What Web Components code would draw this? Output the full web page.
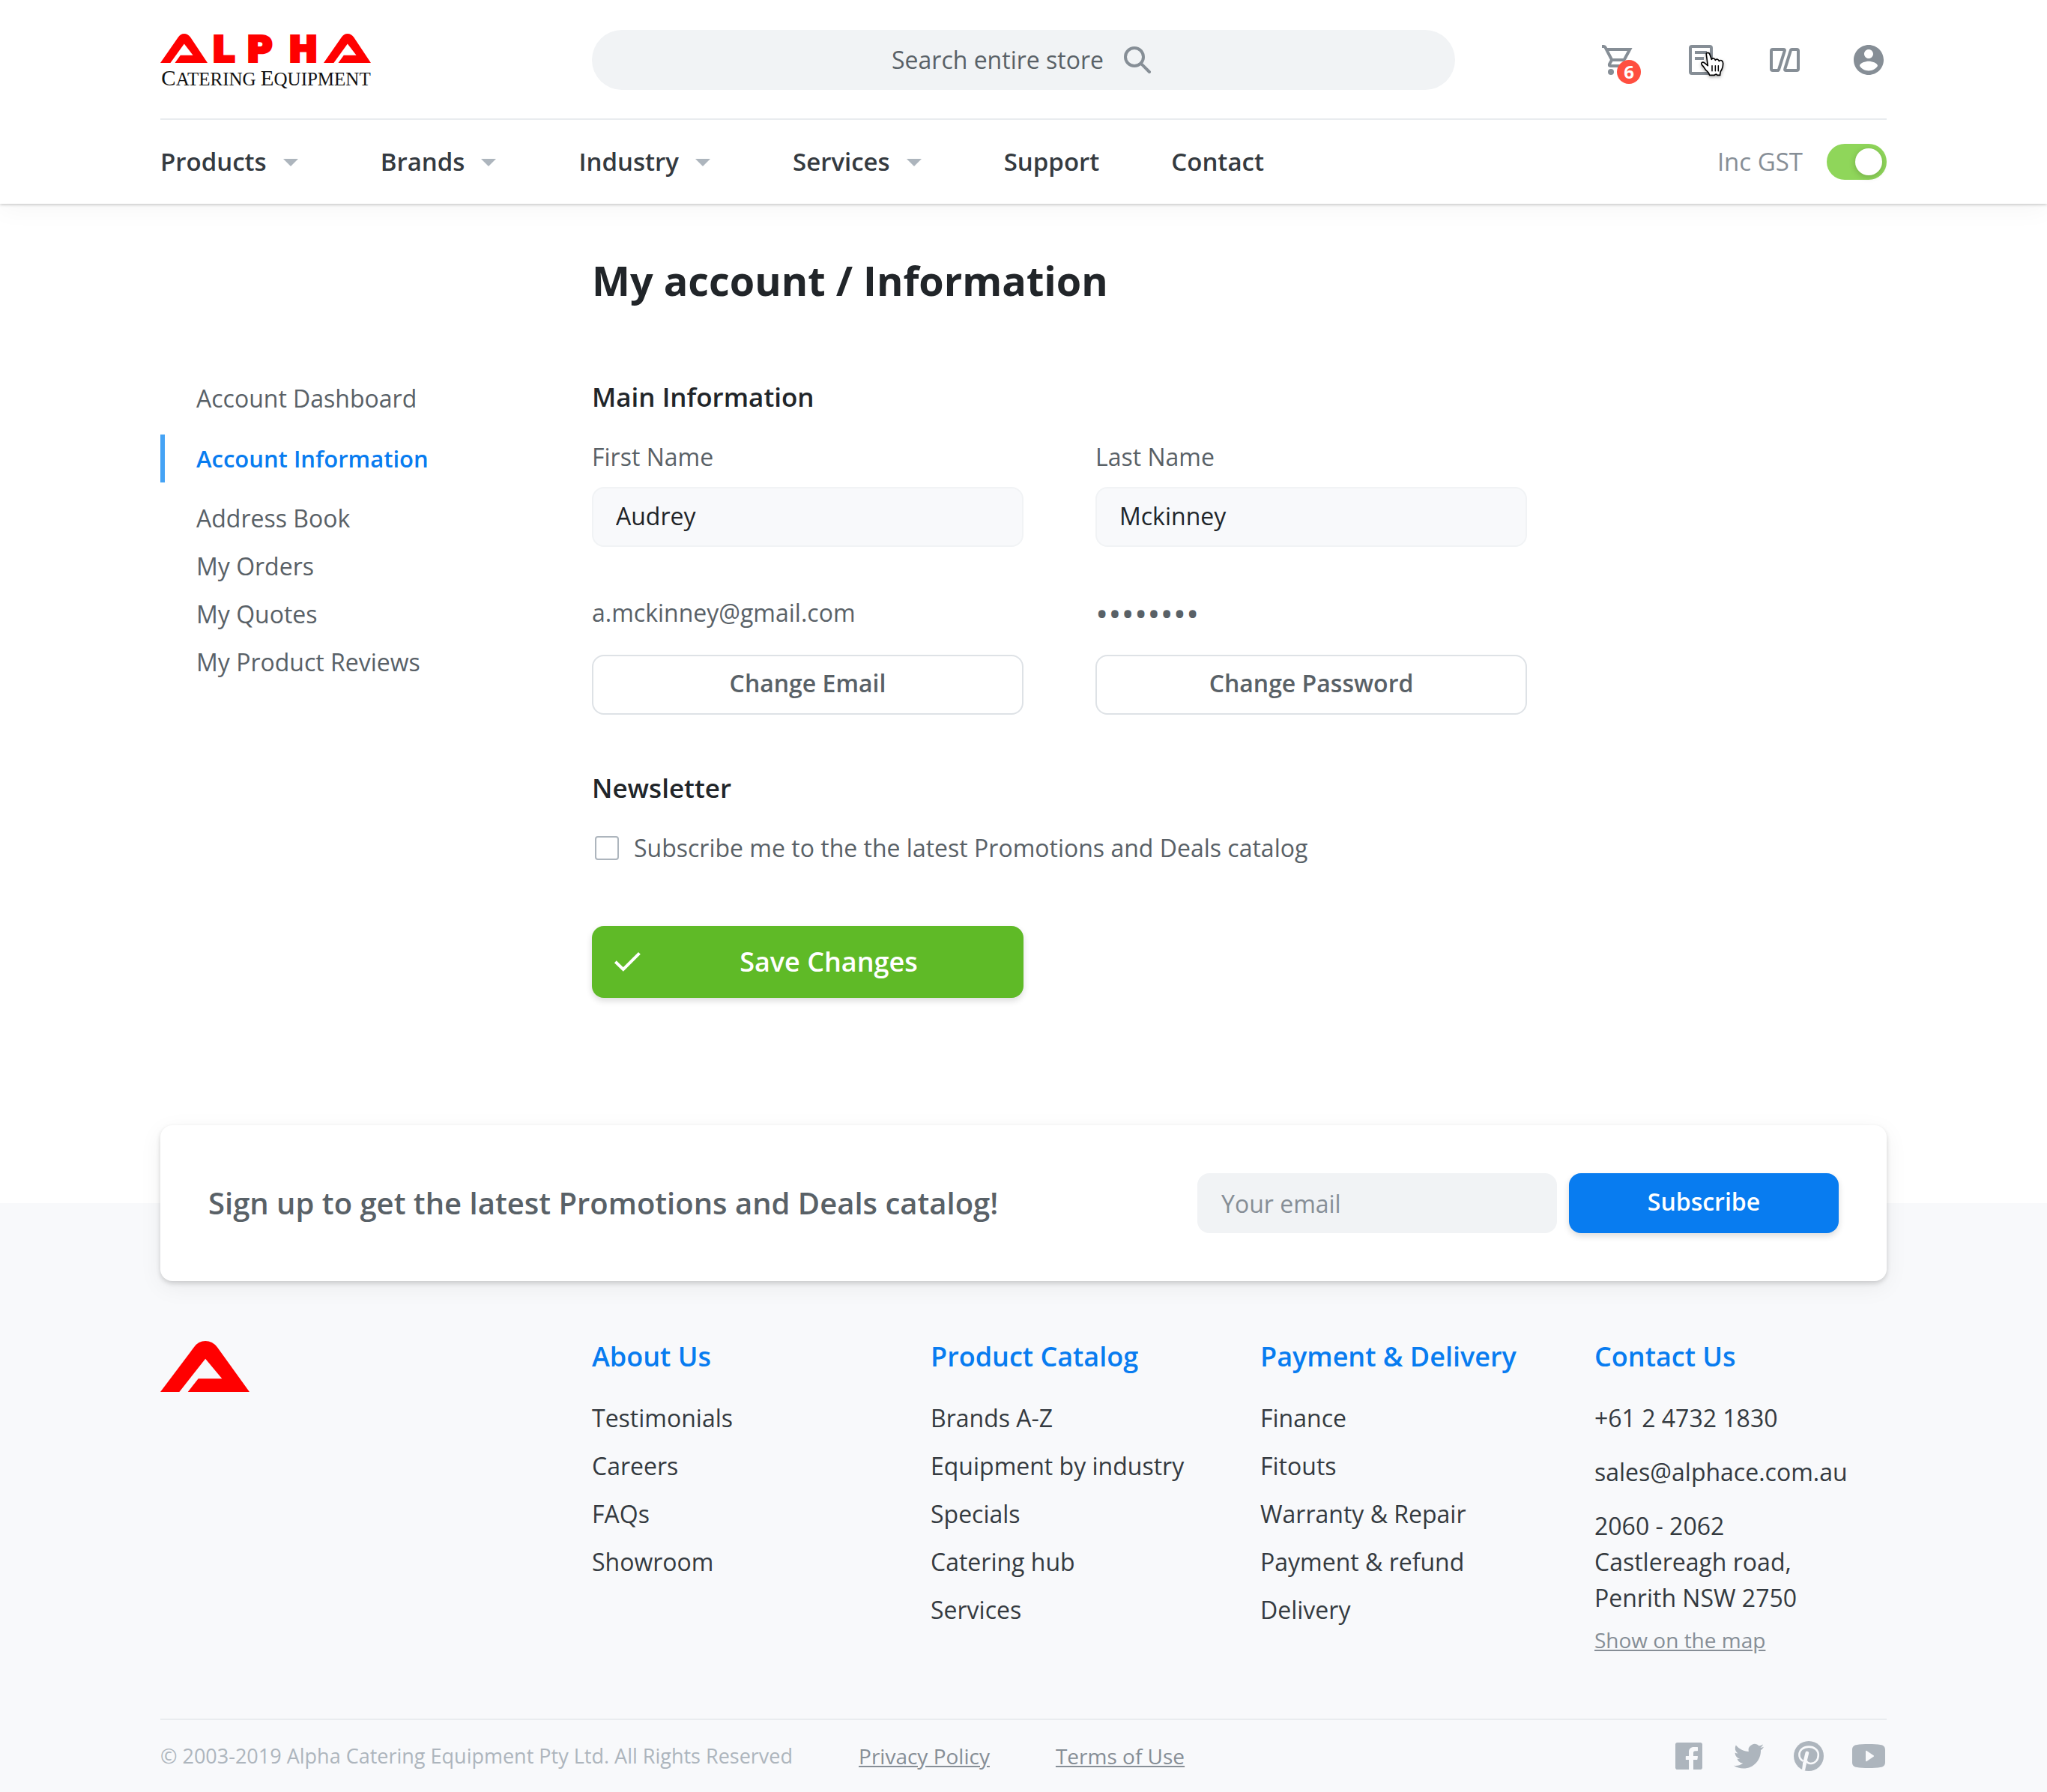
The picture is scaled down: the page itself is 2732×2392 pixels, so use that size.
<!DOCTYPE html>
<html lang="en">
<head>
<meta charset="utf-8">
<meta name="viewport" content="width=device-width, initial-scale=1">
<title>My account / Information</title>
<style>
  :root {
    --ink: #212529;
    --ink-2: #343a40;
    --ink-3: #596167;
    --muted: #868e96;
    --faint: #adb5bd;
    --line: #e9ecef;
    --field: #f1f3f5;
    --canvas: #f8f9fb;
    --blue: #087cf0;
    --green: #5fba27;
    --gutter: max(24px, calc((100% - 2304px) / 2));
  }
  body {
    margin: 0;
    background: #fff;
    color: var(--ink-3);
    font: 400 32px/48px "Open Sans", "Noto Sans", sans-serif;
  }
</style>
</head>
<body>
<account-page></account-page>

<script>
const reset = `
  *, *::before, *::after { box-sizing: border-box; }
  h1, h2, h3, p, ul { margin: 0; padding: 0; }
  ul { list-style: none; }
  a { color: inherit; text-decoration: none; }
  input, button { font: inherit; color: inherit; margin: 0; }
  svg { display: block; flex: none; }
`;

function define(name, css, html) {
  const template = document.createElement('template');
  customElements.define(name, class extends HTMLElement {
    constructor() {
      super();
      const root = this.attachShadow({ mode: 'open' });
      const markup = typeof html === 'function' ? html(this) : html;
      template.innerHTML = `<style>${reset}${css}</style>${markup}`;
      root.append(template.content.cloneNode(true));
    }
  });
}

/* Icons, all on a 24-unit grid */
const icons = {
  search: '<path fill="none" stroke="currentColor" stroke-width="2" stroke-linecap="round" d="M15.2 15.2L20 20"/><circle cx="10" cy="10" r="6" fill="none" stroke="currentColor" stroke-width="2"/>',
  cart: '<g fill="none" stroke="currentColor" stroke-width="2"><path d="M2 3h1.3q.7 0 1 .7L8.6 12h7.6q.6 0 .9-.5L20.600 5H5"/><path d="M8.600 12L7.100 14.600Q6.400 16 7.800 16H20"/></g><circle cx="8" cy="20" r="2" fill="currentColor"/><circle cx="18" cy="20" r="2" fill="currentColor"/>',
  quote: '<rect x="5" y="3" width="14" height="18" rx="1" fill="none" stroke="currentColor" stroke-width="2"/><path fill="none" stroke="currentColor" stroke-width="2" d="M8 7h8M8 11h6"/>',
  compare: '<g fill="none" stroke="currentColor" stroke-width="2" stroke-linejoin="round"><path d="M4 5h7.200q1 0 .7.900L8.100 18.200q-.2.800-1 .800H4q-1 0-1-1V6q0-1 1-1z"/><path d="M20 19h-7.200q-1 0-.7-.900L15.900 5.800q.2-.8 1-.8H20q1 0 1 1v12q0 1-1 1z"/></g>',
  user: '<path fill="currentColor" d="M12 2C6.480 2 2 6.480 2 12s4.480 10 10 10 10-4.480 10-10S17.520 2 12 2zm0 3c1.660 0 3 1.340 3 3s-1.340 3-3 3-3-1.340-3-3 1.340-3 3-3zm0 14.200c-2.500 0-4.710-1.280-6-3.220.030-1.990 4-3.080 6-3.080 1.990 0 5.970 1.090 6 3.080-1.290 1.940-3.500 3.220-6 3.220z"/>',
  caret: '<path fill="currentColor" d="M7 10l5 5 5-5z"/>',
  check: '<path fill="none" stroke="currentColor" stroke-width="2" stroke-linecap="square" d="M4.400 12.600L8.900 17 19 6.900"/>',
  facebook: '<path fill="currentColor" d="M19.700 3H4.300C3.600 3 3 3.600 3 4.300v15.400c0 .7.600 1.300 1.300 1.300h7.700v-6.500h-1.800c-.2 0-.3-.1-.3-.3v-1.900c0-.2.100-.3.300-.3H12V9.300C12 7.200 13.300 6 15.300 6h2.400c.2 0 .3.100.3.300v2c0 .2-.1.300-.3.300h-1.400c-.9 0-1.300.4-1.300 1.300V12h2.700c.2 0 .3.200.3.400l-.3 1.900c0 .1-.1.200-.3.200H15V21h4.700c.7 0 1.300-.6 1.300-1.300V4.300c0-.7-.6-1.300-1.300-1.300z"/>',
  twitter: '<path fill="currentColor" d="M22 5.900c-.7.300-1.500.5-2.300.6.8-.5 1.500-1.300 1.800-2.200-.8.500-1.700.8-2.600 1A4.100 4.100 0 0 0 11.900 9c-3.400-.2-6.400-1.800-8.500-4.300a4.100 4.100 0 0 0 1.300 5.500c-.7 0-1.300-.2-1.900-.5 0 2 1.400 3.700 3.300 4.100-.6.200-1.200.2-1.800.1.500 1.600 2 2.800 3.800 2.800A8.300 8.300 0 0 1 2 18.400 11.700 11.700 0 0 0 8.300 20.300c7.500 0 11.700-6.300 11.700-11.700v-.5c.8-.6 1.500-1.300 2-2.200z"/>',
  pinterest: '<circle cx="12" cy="12" r="10" fill="currentColor"/><path fill="none" stroke="var(--canvas)" stroke-width="1.300" d="M8.200 15.300C6.500 14.300 5.700 12.900 5.700 11.200 5.700 8 8.500 5.800 12.100 5.800c3.700 0 6.300 2.300 6.300 5.400 0 3.400-2.200 5.800-5 5.800-1.500 0-2.500-.7-2.900-1.700"/><path fill="none" stroke="var(--canvas)" stroke-width="2.400" stroke-linecap="round" d="M10.900 10L9.200 17"/><path fill="var(--canvas)" d="M8.100 16.500l2.400.3-1 4.900-2-.6z"/>',
  youtube: '<path fill="currentColor" fill-rule="evenodd" d="M4.200 4.500C6 4.100 9 4 12 4s6 .1 7.800.5C22.200 4.800 23 6 23 8v8c0 2-.8 3.200-3.200 3.500C18 19.900 15 20 12 20s-6-.1-7.800-.5C1.800 19.200 1 18 1 16V8c0-2 .8-3.200 3.200-3.500zM10 8.900v6.200c0 .4.300.6.700.4l4.600-3.100c.3-.2.300-.6 0-.8l-4.600-3.100c-.4-.2-.7 0-.7.400z"/>'
};

define('ui-icon',
  `:host { display: block; width: 48px; height: 48px; flex: none; }`,
  el => `<svg width="48" height="48" viewBox="0 0 24 24" aria-hidden="true">${icons[el.getAttribute('name')]}</svg>`);

/* The red A emblem: alone in the footer, twice in the logo */
const emblem = 'M0 115 71 14Q80 0 95 0T120 14L188 115H58L80 85H130L95 40 40 115Z';

define('alpha-mark',
  `:host { display: block; } `,
  `<svg width="119" height="68" viewBox="0 0 188 115" preserveAspectRatio="none" role="img" aria-label="Alpha"><path fill="#f00" d="${emblem}"/></svg>`);

define('alpha-logo', `
  :host { display: block; color: #111; }
  a { display: block; width: 282px; padding-top: 6px; }
  svg { overflow: visible; }
  p { margin-top: 4px; font: 25px/32px "Liberation Serif", serif; text-transform: uppercase; white-space: nowrap; text-align: center; }
  p span { font-size: 29px; }
  text { font: 700 47px "DejaVu Sans", sans-serif; fill: #f00; stroke: #f00; stroke-width: 4; }
`, `<a href="#"><svg width="282" height="39" viewBox="0 0 282 39" role="img" aria-label="Alpha">
    <svg width="63" height="39" viewBox="0 0 188 115" preserveAspectRatio="none"><path fill="#f00" d="${emblem}"/></svg>
    <text x="69 115 171" y="37">LPH</text>
    <svg x="218" width="63" height="39" viewBox="0 0 188 115" preserveAspectRatio="none"><path fill="#f00" d="${emblem}"/></svg>
  </svg><p><span>C</span>atering <span>E</span>quipment</p></a>`);

define('search-box', `
  :host { display: block; }
  label { display: flex; align-items: center; justify-content: center; gap: 16px; height: 80px; border-radius: 40px; background: var(--field); color: var(--muted); }
  input { width: 288px; padding: 0; border: 0; outline: 0; background: none; appearance: none; }
  input::-webkit-search-cancel-button { display: none; }
  input::placeholder { color: var(--ink-3); opacity: 1; }
`, `<label><input type="search" placeholder="Search entire store" aria-label="Search entire store"><ui-icon name="search"></ui-icon></label>`);

define('icon-link', `
  :host { display: block; position: relative; color: var(--muted); }
  a { display: block; }
`, el => `<a href="#" aria-label="${el.getAttribute('label')}"><ui-icon name="${el.getAttribute('icon')}"></ui-icon></a><slot></slot>`);

define('count-badge',
  `:host { position: absolute; left: 24px; top: 24px; width: 32px; height: 32px; border-radius: 50%; background: #ff4f40; color: #fff; font-size: 24px; font-weight: 700; line-height: 32px; text-align: center; }`,
  `<slot></slot>`);

define('hand-pointer', `
  :host { position: absolute; left: 22px; top: 12px; pointer-events: none; }
  svg { filter: drop-shadow(0 2px 2px rgba(0,0,0,.3)); }
`, `<svg width="34" height="36" viewBox="474 116 102 108" aria-hidden="true">
    <path fill="#fff" stroke="#000" stroke-width="5" stroke-linejoin="round" d="M502 131Q501 123 508 123 514 123 516 130L523 150Q526 144 532 146 537 148 538 153 541 148 547 150 552 152 553 157 557 152 563 154 569 157 569 166 569 180 564 190 556 199 557 213H546Q540 206 535 213H515Q514 205 506 198 498 192 494 184 490 177 485 173 480 166 485 162 490 160 496 165L508 175Z"/>
    <path fill="none" stroke="#000" stroke-width="4.500" stroke-linecap="round" d="M525 175V196M538 175V196M550 175V196"/>
  </svg>`);

define('nav-item', `
  :host { display: block; color: var(--ink-2); font-size: 33px; font-weight: 600; }
  a { display: flex; align-items: center; gap: 8px; }
  ui-icon { color: var(--faint); }
`, el => `<a href="#"><slot></slot>${el.hasAttribute('menu') ? '<ui-icon name="caret"></ui-icon>' : ''}</a>`);

define('tax-switch', `
  :host { display: block; color: var(--muted); font-size: 33px; }
  label { display: flex; align-items: center; gap: 32px; }
  input { appearance: none; display: flex; justify-content: flex-end; width: 80px; height: 48px; padding: 6px; border-radius: 24px; background: #8fd65a; }
  input::before { content: ""; width: 36px; height: 36px; border-radius: 50%; background: #fff; box-shadow: 0 2px 8px rgba(0,0,0,.2); }
  input:not(:checked) { justify-content: flex-start; background: var(--faint); }
`, `<label><slot></slot><input type="checkbox" role="switch" checked></label>`);

define('site-header', `
  :host { display: block; padding: 0 var(--gutter); background: #fff; box-shadow: 0 1px 4px rgba(0,0,0,.24), 0 8px 32px rgba(0,0,0,.04); }
  .top { display: grid; grid-template-columns: 1fr 2fr 1fr; align-items: center; height: 160px; padding-top: 2px; border-bottom: 2px solid var(--line); }
  .tools { display: flex; justify-content: flex-end; gap: 64px; }
  nav { display: flex; align-items: center; gap: 96px; height: 112px; }
  tax-switch { margin-left: auto; }
`, `<div class="top">
    <alpha-logo></alpha-logo>
    <search-box></search-box>
    <div class="tools">
      <icon-link icon="cart" label="Cart"><count-badge>6</count-badge></icon-link>
      <icon-link icon="quote" label="Quotes"><hand-pointer></hand-pointer></icon-link>
      <icon-link icon="compare" label="Compare"></icon-link>
      <icon-link icon="user" label="Account"></icon-link>
    </div>
  </div>
  <nav aria-label="Main">
    <nav-item menu>Products</nav-item>
    <nav-item menu>Brands</nav-item>
    <nav-item menu>Industry</nav-item>
    <nav-item menu>Services</nav-item>
    <nav-item>Support</nav-item>
    <nav-item>Contact</nav-item>
    <tax-switch>Inc GST</tax-switch>
  </nav>`);

define('side-link', `
  :host { display: block; border-left: 6px solid transparent; padding-left: 42px; line-height: 64px; }
  :host([current]) { margin: 16px 0; border-color: #45a3f5; color: var(--blue); font-size: 31px; font-weight: 600; }
`, `<a href="#"><slot></slot></a>`);

define('text-field', `
  :host { display: block; }
  label { display: block; margin-bottom: 16px; }
  input { display: block; width: 100%; height: 80px; padding: 0 30px 4px; border: 2px solid var(--field); border-radius: 16px; background: var(--canvas); color: var(--ink); outline: 0; }
`, el => `<label for="f">${el.getAttribute('label')}</label><input id="f" type="text" value="${el.getAttribute('value')}">`);

define('ui-button', `
  :host { display: block; }
  button { display: flex; align-items: center; justify-content: center; width: 100%; height: 80px; padding: 0 16px 4px; border: 2px solid #dee2e6; border-radius: 16px; background: #fff; font-weight: 600; }
  :host([kind]) button { border: 0; color: #fff; box-shadow: 0 4px 8px rgba(0,0,0,.14); }
  :host([kind=primary]) button { background: var(--blue); }
  :host([kind=success]) button { height: 96px; padding: 0 16px 0 24px; background: var(--green); font-size: 36px; }
  ui-icon + span { flex: 1; }
`, el => `<button type="button">${el.hasAttribute('icon') ? `<ui-icon name="${el.getAttribute('icon')}"></ui-icon>` : ''}<span><slot></slot></span></button>`);

define('credential-row', `
  :host { display: grid; gap: 32px; }
  p { height: 48px; }
  :host([masked]) p { font-size: 46px; }
`, el => `<p><slot></slot></p><ui-button>${el.getAttribute('action')}</ui-button>`);

define('check-field', `
  :host { display: block; }
  label { display: flex; align-items: center; gap: 20px; padding-left: 4px; }
  input { appearance: none; width: 32px; height: 32px; border: 2px solid var(--faint); border-radius: 4px; background: #fff; }
  input:checked { background: var(--blue); }
`, `<label><input type="checkbox"><span><slot></slot></span></label>`);

define('account-form', `
  :host { display: block; }
  h2 { margin-bottom: 26px; color: var(--ink); font-size: 35px; font-weight: 600; line-height: 60px; }
  .pair { display: grid; grid-template-columns: 1fr 1fr; column-gap: 96px; row-gap: 64px; margin-bottom: 68px; }
  .save { display: grid; grid-template-columns: 1fr 1fr; column-gap: 96px; margin-top: 80px; }
`, `<h2>Main Information</h2>
  <div class="pair">
    <text-field label="First Name" value="Audrey"></text-field>
    <text-field label="Last Name" value="Mckinney"></text-field>
    <credential-row action="Change Email">a.mckinney@gmail.com</credential-row>
    <credential-row action="Change Password" masked>••••••••</credential-row>
  </div>
  <h2>Newsletter</h2>
  <check-field>Subscribe me to the the latest Promotions and Deals catalog</check-field>
  <div class="save"><ui-button kind="success" icon="check">Save Changes</ui-button></div>`);

define('signup-banner', `
  :host { display: block; position: relative; z-index: 1; padding: 0 var(--gutter); background: linear-gradient(#fff 50%, var(--canvas) 50%); }
  form { display: flex; align-items: center; gap: 16px; padding: 64px; border-radius: 16px; background: #fff; box-shadow: 0 3px 6px rgba(0,0,0,.16), 0 8px 32px rgba(0,0,0,.06); }
  label { flex: 1; font-size: 40px; font-weight: 600; }
  input { width: 480px; height: 80px; padding: 0 32px; border: 0; border-radius: 16px; background: var(--field); }
  input::placeholder { color: var(--muted); opacity: 1; }
  ui-button { width: 360px; }
`, `<form>
    <label for="mail">Sign up to get the latest Promotions and Deals catalog!</label>
    <input id="mail" type="email" placeholder="Your email">
    <ui-button kind="primary">Subscribe</ui-button>
  </form>`);

define('link-column', `
  :host { display: block; color: var(--ink-2); line-height: 64px; }
  h3 { margin-bottom: 20px; color: var(--blue); font-size: 36px; font-weight: 600; line-height: 60px; white-space: nowrap; }
`, el => `<h3>${el.getAttribute('heading')}</h3><ul>${(el.getAttribute('links') || '').split('|').filter(Boolean).map(t => `<li><a href="#">${t}</a></li>`).join('')}</ul><slot></slot>`);

define('contact-details', `
  :host { display: grid; gap: 24px; padding-top: 8px; line-height: 48px; }
  .map { display: block; margin-top: 12px; color: var(--muted); font-size: 28px; line-height: 40px; text-decoration: underline; }
`, `<a href="#">+61 2 4732 1830</a><a href="#">sales@alphace.com.au</a>
   <div><p>2060 - 2062<br>Castlereagh road,<br>Penrith NSW 2750</p><a class="map" href="#">Show on the map</a></div>`);

define('site-footer', `
  :host { display: block; padding: 71px var(--gutter) 0; background: var(--canvas); }
  .columns { display: grid; grid-template-columns: 576fr 452fr 440fr 446fr 390fr; padding-bottom: 85px; border-bottom: 2px solid var(--line); }
  alpha-mark { padding-top: 9px; }
  .legal { display: flex; align-items: center; gap: 88px; height: 96px; color: var(--faint); font-size: 28px; }
  .legal p { font-size: 27px; }
  .legal a { color: var(--muted); text-decoration: underline; }
  .social { display: flex; gap: 32px; margin-left: auto; }
  .social icon-link { --muted: var(--faint); }
`, `<div class="columns">
    <alpha-mark></alpha-mark>
    <link-column heading="About Us" links="Testimonials|Careers|FAQs|Showroom"></link-column>
    <link-column heading="Product Catalog" links="Brands A-Z|Equipment by industry|Specials|Catering hub|Services"></link-column>
    <link-column heading="Payment &amp;amp; Delivery" links="Finance|Fitouts|Warranty &amp;amp; Repair|Payment &amp;amp; refund|Delivery"></link-column>
    <link-column heading="Contact Us"><contact-details></contact-details></link-column>
  </div>
  <div class="legal">
    <p>© 2003-2019 Alpha Catering Equipment Pty Ltd. All Rights Reserved</p>
    <a href="#">Privacy Policy</a>
    <a href="#">Terms of Use</a>
    <div class="social">
      <icon-link icon="facebook" label="Facebook"></icon-link>
      <icon-link icon="twitter" label="Twitter"></icon-link>
      <icon-link icon="pinterest" label="Pinterest"></icon-link>
      <icon-link icon="youtube" label="YouTube"></icon-link>
    </div>
  </div>`);

define('account-page', `
  :host { display: block; }
  main { display: grid; grid-template-columns: 576fr 1248fr 480fr; padding: 64px var(--gutter) 170px; }
  h1 { grid-column: 2 / -1; margin-bottom: 88px; color: var(--ink); font-size: 54px; font-weight: 700; line-height: 76px; }
  nav { grid-column: 1; }
`, `<site-header></site-header>
  <main>
    <h1>My account / Information</h1>
    <nav aria-label="Account">
      <side-link>Account Dashboard</side-link>
      <side-link current>Account Information</side-link>
      <side-link>Address Book</side-link>
      <side-link>My Orders</side-link>
      <side-link>My Quotes</side-link>
      <side-link>My Product Reviews</side-link>
    </nav>
    <account-form></account-form>
  </main>
  <signup-banner></signup-banner>
  <site-footer></site-footer>`);
</script>
</body>
</html>
